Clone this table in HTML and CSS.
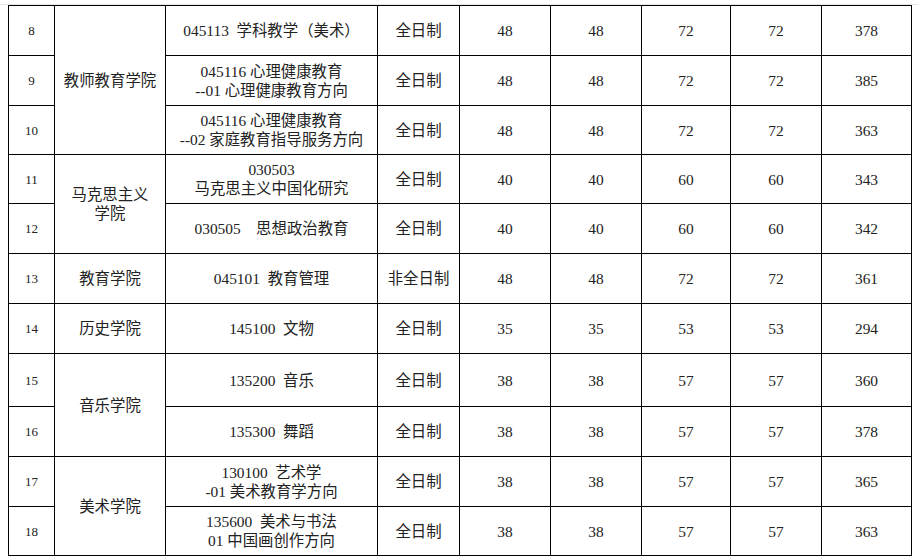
FILE: index.html
```html
<!DOCTYPE html>
<html lang="zh-CN">
<head>
<meta charset="utf-8">
<title>招生计划</title>
<link rel="stylesheet" href="styles.css">
</head>
<body>
<div class="topline"></div>
<table class="plan">
  <colgroup>
    <col class="c-no"><col class="c-dept"><col class="c-major"><col class="c-type">
    <col class="c-n1"><col class="c-n2"><col class="c-n3"><col class="c-n4"><col class="c-n5">
  </colgroup>
  <tbody>
    <tr class="h50">
      <td class="no">8</td>
      <td rowspan="3">教师教育学院</td>
      <td class="pre">045113  学科教学（美术）</td>
      <td>全日制</td><td>48</td><td>48</td><td>72</td><td>72</td><td>378</td>
    </tr>
    <tr class="h50">
      <td class="no">9</td>
      <td class="pre">045116 心理健康教育<br>--01 心理健康教育方向</td>
      <td>全日制</td><td>48</td><td>48</td><td>72</td><td>72</td><td>385</td>
    </tr>
    <tr class="h49">
      <td class="no">10</td>
      <td class="pre">045116 心理健康教育<br>--02 家庭教育指导服务方向</td>
      <td>全日制</td><td>48</td><td>48</td><td>72</td><td>72</td><td>363</td>
    </tr>
    <tr class="h49">
      <td class="no">11</td>
      <td rowspan="2">马克思主义<br>学院</td>
      <td>030503<br>马克思主义中国化研究</td>
      <td>全日制</td><td>40</td><td>40</td><td>60</td><td>60</td><td>343</td>
    </tr>
    <tr class="h50">
      <td class="no">12</td>
      <td class="pre">030505    思想政治教育</td>
      <td>全日制</td><td>40</td><td>40</td><td>60</td><td>60</td><td>342</td>
    </tr>
    <tr class="h50">
      <td class="no">13</td>
      <td>教育学院</td>
      <td class="pre">045101  教育管理</td>
      <td>非全日制</td><td>48</td><td>48</td><td>72</td><td>72</td><td>361</td>
    </tr>
    <tr class="h50">
      <td class="no">14</td>
      <td>历史学院</td>
      <td class="pre">145100  文物</td>
      <td>全日制</td><td>35</td><td>35</td><td>53</td><td>53</td><td>294</td>
    </tr>
    <tr class="h53">
      <td class="no">15</td>
      <td rowspan="2">音乐学院</td>
      <td class="pre">135200  音乐</td>
      <td>全日制</td><td>38</td><td>38</td><td>57</td><td>57</td><td>360</td>
    </tr>
    <tr class="h50">
      <td class="no">16</td>
      <td class="pre">135300  舞蹈</td>
      <td>全日制</td><td>38</td><td>38</td><td>57</td><td>57</td><td>378</td>
    </tr>
    <tr class="h50">
      <td class="no">17</td>
      <td rowspan="2">美术学院</td>
      <td class="pre">130100  艺术学<br>-01 美术教育学方向</td>
      <td>全日制</td><td>38</td><td>38</td><td>57</td><td>57</td><td>365</td>
    </tr>
    <tr class="h49">
      <td class="no">18</td>
      <td class="pre">135600  美术与书法<br>01 中国画创作方向</td>
      <td>全日制</td><td>38</td><td>38</td><td>57</td><td>57</td><td>363</td>
    </tr>
  </tbody>
</table>
</body>
</html>
```

FILE: styles.css
```css
html, body {
  margin: 0;
  padding: 0;
  background: #ffffff;
}

body {
  font-family: "Liberation Serif", "Noto Sans CJK SC", serif;
  font-size: 15.4px;
  color: #222222;
}

.topline {
  height: 5px;
  border-bottom: 1px solid #e6e6e6;
  box-sizing: border-box;
}

.plan {
  margin-left: 8px;
  border-collapse: collapse;
  table-layout: fixed;
  width: 904px;
}

.c-no { width: 46px; }
.c-dept { width: 111px; }
.c-major { width: 212px; }
.c-type { width: 82px; }
.c-n1 { width: 91px; }
.c-n2 { width: 91px; }
.c-n3 { width: 89px; }
.c-n4 { width: 91px; }
.c-n5 { width: 90px; }

.plan td {
  border: 1px solid #000000;
  text-align: center;
  vertical-align: middle;
  padding: 0;
  line-height: 19px;
}

.plan td.no {
  font-size: 13px;
}

.plan td.pre {
  white-space: pre;
}

.h49 td { height: 48px; }
.h50 td { height: 49px; }
.h53 td { height: 52px; }
```
